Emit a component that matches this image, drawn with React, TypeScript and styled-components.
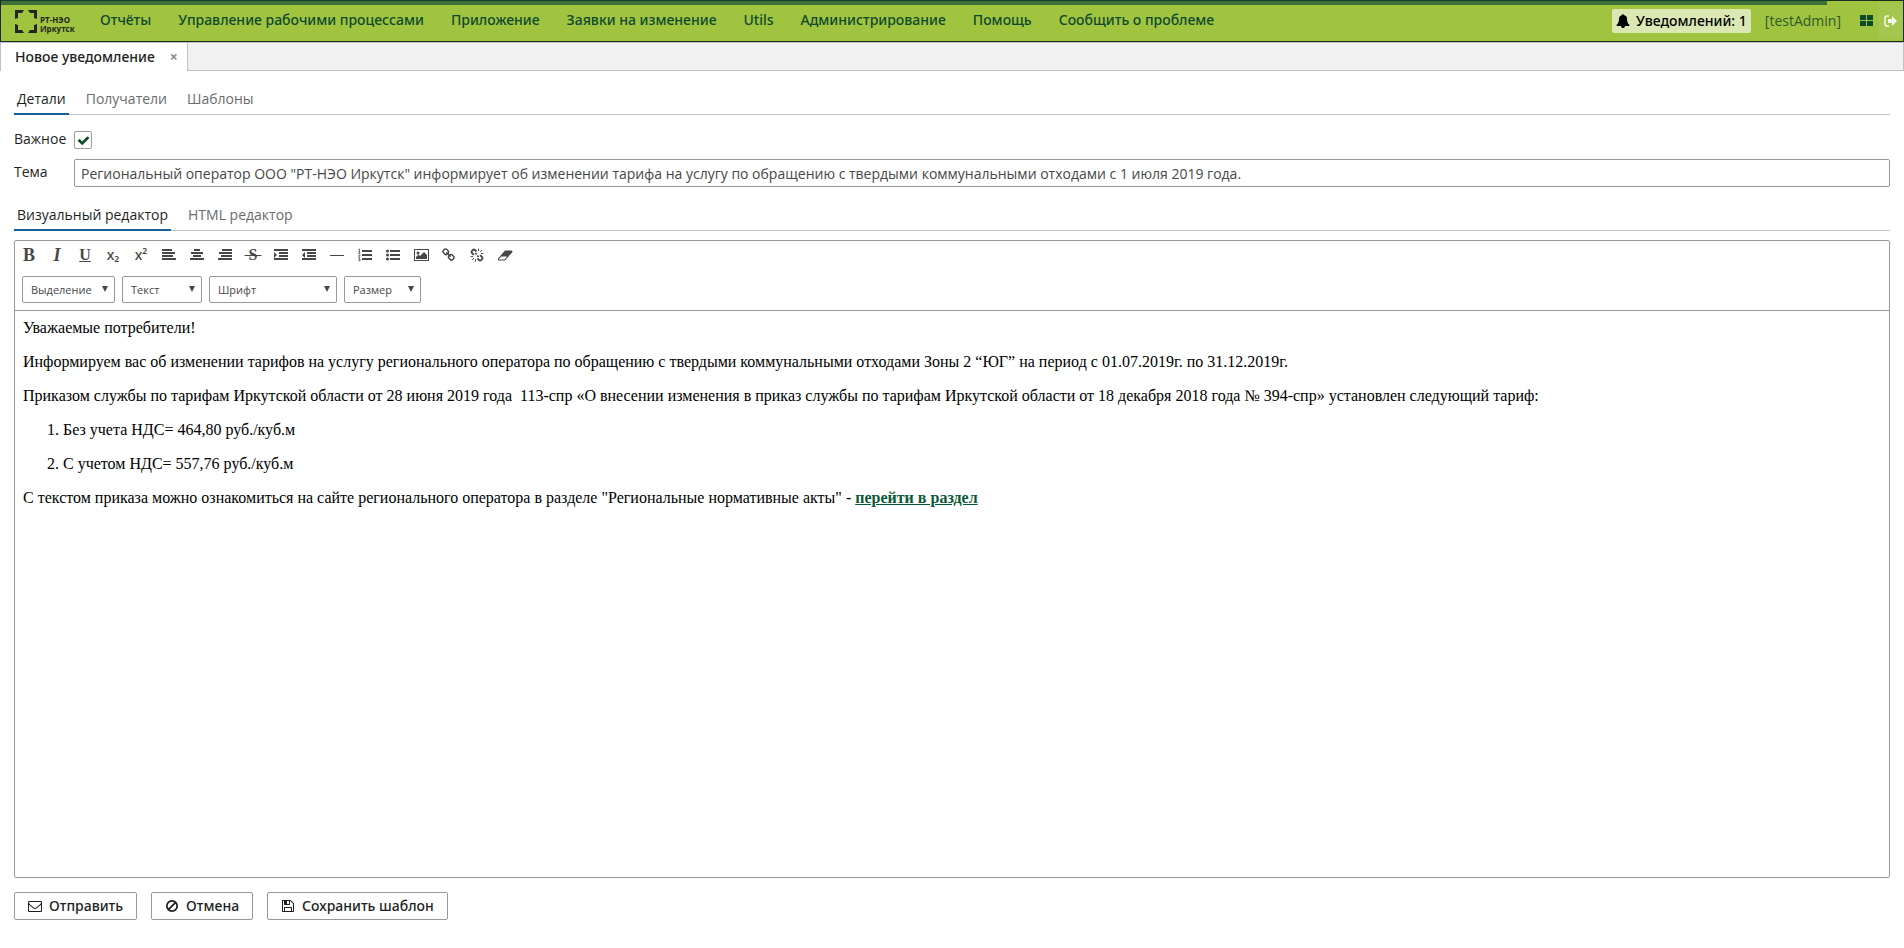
import React, { useState } from 'react';
import type { ReactNode } from 'react';
import styled, { createGlobalStyle, css } from 'styled-components';

const Global = createGlobalStyle`
  *, *::before, *::after { box-sizing: border-box; }
  body {
    margin: 0;
    font-family: "Open Sans", "Noto Sans", sans-serif;
    font-size: 14px;
    line-height: 20px;
    color: #1f1f1f;
    background: #fff;
  }
  button, input, select { font: inherit; color: inherit; margin: 0; }
`;

const medium = css`
  font-family: "Noto Sans", "Open Sans", sans-serif;
  font-weight: 500;
`;

const Page = styled.div`
  display: flex;
  flex-direction: column;
  min-height: 100vh;
`;

const Header = styled.header`
  position: relative;
  display: flex;
  align-items: center;
  height: 42px;
  padding-left: 14px;
  background: #a0c440;
  border: 1px solid #1f2a1f;
`;

const Progress = styled.div`
  position: absolute;
  top: -1px;
  left: 0;
  width: 96%;
  height: 5px;
  background: #3c7038;
  border-top: 1px solid #173d2d;
`;

const Logo = styled.div`
  display: flex;
  align-items: flex-end;
  gap: 3px;
  width: 62px;
  height: 24px;
  color: #23261f;
`;

const LogoText = styled.div`
  font-size: 8px;
  font-weight: 700;
  line-height: 9px;
  white-space: nowrap;
`;

const Menu = styled.nav`
  display: flex;
  flex: 1;
  gap: 3px;
  margin-left: 11px;
  padding-bottom: 2px;
`;

const MenuItem = styled.button`
  ${medium}
  padding: 0 12px;
  border: 0;
  background: none;
  color: #0f4a2e;
  white-space: nowrap;
`;

const Notifications = styled.button`
  ${medium}
  display: flex;
  align-items: center;
  gap: 6px;
  height: 24px;
  padding: 0 4px;
  border: 0;
  border-radius: 2px;
  background: #dbe8b4;
  color: #000;
  white-space: nowrap;
`;

const User = styled.span`
  margin: 0 12px 0 14px;
  color: #2f5a2b;
`;

const HeaderIcon = styled.button<{ $light?: boolean }>`
  display: flex;
  align-items: center;
  justify-content: center;
  width: 25px;
  height: 36px;
  padding: 0;
  border: 0;
  background: ${p => (p.$light ? '#a4c54e' : 'none')};
  color: ${p => (p.$light ? '#f4f7ea' : '#0d4a2c')};
`;

const WindowTabs = styled.div`
  display: flex;
  height: 29px;
  background: #f1f1f1;
  border: 1px solid #c2c2c2;
`;

const WindowTab = styled.div`
  ${medium}
  display: flex;
  align-items: center;
  gap: 12px;
  height: 28px;
  padding: 0 6px 0 14px;
  background: #fff;
  border-right: 1px solid #c2c2c2;
`;

const CloseTab = styled.button`
  width: 14px;
  padding: 0;
  border: 0;
  background: none;
  color: #8a8a8a;
  font-weight: 700;
  line-height: 14px;
`;

const Content = styled.main`
  display: flex;
  flex: 1;
  flex-direction: column;
  padding: 14px 14px 28px;
`;

const Tabs = styled.div`
  display: flex;
  gap: 14px;
  height: 30px;
  border-bottom: 1px solid #c4c4c4;
`;

const Tab = styled.button<{ $active?: boolean }>`
  height: 30px;
  padding: 0 3px;
  border: 0;
  border-bottom: 2px solid ${p => (p.$active ? '#1b5f97' : 'transparent')};
  background: none;
  color: ${p => (p.$active ? '#1f1f1f' : '#6b6b6b')};
`;

const Form = styled.div`
  display: grid;
  grid-template-columns: 60px 1fr;
  row-gap: 10px;
  align-items: center;
  padding: 16px 0 14px;
`;

const Label = styled.label`
  padding-bottom: 2px;
  line-height: 16px;
`;

const CheckWrap = styled.span`
  position: relative;
  display: flex;
  width: 18px;
  height: 18px;

  svg {
    position: absolute;
    left: 3px;
    top: 3px;
    pointer-events: none;
  }
`;

const CheckInput = styled.input`
  appearance: none;
  width: 18px;
  height: 18px;
  border: 1px solid #9b9b9b;
  border-radius: 2px;
  background: #fff;
`;

const TextInput = styled.input`
  width: 100%;
  height: 28px;
  padding: 0 6px;
  border: 1px solid #999;
  border-radius: 2px;
  background: #fff;
  color: #474747;
`;

const Editor = styled.section`
  display: flex;
  flex: 1;
  flex-direction: column;
  margin-top: 9px;
  border: 1px solid #999;
  border-radius: 2px;
`;

const Toolbar = styled.div`
  display: flex;
  flex-direction: column;
  gap: 7px;
  padding: 0 7px 7px;
  border-bottom: 1px solid #999;
  color: #474747;
`;

const ToolRow = styled.div`
  display: flex;
  gap: 7px;
`;

const IconRow = styled.div`
  display: flex;
  margin-left: -7px;
`;

const Tool = styled.button`
  display: flex;
  align-items: center;
  justify-content: center;
  width: 28px;
  height: 28px;
  padding: 0;
  border: 0;
  background: none;
`;

const Letter = styled.span<{ $large?: boolean; $italic?: boolean; $line?: string }>`
  font-family: "Liberation Serif", serif;
  font-size: ${p => (p.$large ? 18 : 16)}px;
  font-weight: 700;
  font-style: ${p => (p.$italic ? 'italic' : 'normal')};
  text-decoration: ${p => p.$line ?? 'none'};
  text-decoration-thickness: 1px;
`;

const Script = styled.span`
  font-family: "Noto Sans", sans-serif;
  font-weight: 500;
`;

const SelectWrap = styled.span<{ $width: number }>`
  position: relative;
  width: ${p => p.$width}px;

  svg {
    position: absolute;
    right: 7px;
    top: 10px;
    pointer-events: none;
  }
`;

const Select = styled.select`
  display: block;
  appearance: none;
  width: 100%;
  height: 27px;
  padding: 0 8px;
  border: 1px solid #999;
  border-radius: 2px;
  background: #fff;
  font-size: 11px;
`;

const Body = styled.div`
  flex: 1;
  padding: 8px;
  font-family: "Liberation Serif", serif;
  font-size: 16px;
  line-height: 18px;
  color: #000;

  p { margin: 0 0 16px; }
  ol { margin: 0; padding-left: 40px; }
  a { color: #0b5a37; font-weight: 700; }
`;

const Actions = styled.div`
  display: flex;
  gap: 14px;
  margin-top: 14px;
`;

const Action = styled.button`
  ${medium}
  display: flex;
  align-items: center;
  gap: 7px;
  height: 28px;
  padding: 0 13px;
  border: 1px solid #999;
  border-radius: 2px;
  background: #fff;
`;

const paths = {
  envelope:
    'M1664 1504v-768q-32 36-69 66-268 206-426 338-51 43-83 67t-86.500 48.500-102.500 24.500h-2q-48 0-102.500-24.500t-86.500-48.500-83-67q-158-132-426-338-37-30-69-66v768q0 13 9.500 22.500t22.500 9.500h1472q13 0 22.500-9.500t9.500-22.500zm0-1051v-24.500l-.5-13-3-12.500-5.500-9-9-7.500-14-2.500h-1472q-13 0-22.500 9.500t-9.500 22.500q0 168 147 284 193 152 401 317 6 5 35 29.500t46 37.500 44.500 31.500 50.500 27.500 43 9h2q20 0 43-9t50.500-27.500 44.500-31.500 46-37.500 35-29.500q208-165 401-317 54-43 100.500-115.500t46.500-131.500zm128-37v1088q0 66-47 113t-113 47h-1472q-66 0-113-47t-47-113v-1088q0-66 47-113t113-47h1472q66 0 113 47t47 113z',
  ban: 'M1440 893q0-161-87-295l-754 753q137 89 297 89 111 0 211.500-43.500t173.500-116.500 116-174.500 43-212.500zm-999 299l755-754q-135-91-300-91-148 0-273 73t-198 199-73 274q0 162 89 299zm1223-299q0 157-61 300t-163.500 246-245 164-298.500 61-298.500-61-245-164-163.500-246-61-300 61-299.500 163.500-245.500 245-164 298.500-61 298.500 61 245 164 163.500 245.500 61 299.500z',
  floppy:
    'M512 1536h768v-384h-768v384zm896 0h128v-896q0-14-10-38.500t-20-34.500l-281-281q-10-10-34-20t-39-10v416q0 40-28 68t-68 28h-576q-40 0-68-28t-28-68v-416h-128v1280h128v-416q0-40 28-68t68-28h832q40 0 68 28t28 68v416zm-384-928v-320q0-13-9.500-22.500t-22.500-9.500h-192q-13 0-22.500 9.500t-9.500 22.500v320q0 13 9.500 22.500t22.500 9.500h192q13 0 22.500-9.500t9.500-22.500zm640 32v928q0 40-28 68t-68 28h-1344q-40 0-68-28t-28-68v-1344q0-40 28-68t68-28h928q40 0 88 20t76 48l280 280q28 28 48 76t20 88z',
  eraser:
    'M832 1408l336-384h-768l-336 384h768zm1013-1077q15 34 9.500 71.500t-30.500 65.500l-896 1024q-38 44-96 44h-768q-38 0-69.500-20.500t-47.500-54.500q-15-34-9.500-71.500t30.500-65.500l896-1024q38-44 96-44h768q38 0 69.500 20.500t47.500 54.500z',
  bell: 'M1728 1408q0 52-38 90t-90 38h-448q0 106-75 181t-181 75-181-75-75-181h-448q-52 0-90-38t-38-90q50-42 91-88t85-119.500 74.500-158.500 50-206 19.500-260q0-152 117-282.500t307-158.500q-8-19-8-39 0-40 28-68t68-28 68 28 28 68q0 20-8 39 190 28 307 158.500t117 282.500q0 139 19.500 260t50 206 74.500 158.500 85 119.500 91 88z',
  link: 'M1456 1216q0-40-28-68l-208-208q-28-28-68-28-42 0-72 32 3 3 19 18.500t21.500 21.500 15 19 13 25.500 3.500 27.500q0 40-28 68t-68 28q-15 0-27.500-3.500t-25.500-13-19-15-21.500-21.500-18.500-19q-33 31-33 73 0 40 28 68l206 207q27 27 68 27 40 0 68-26l147-146q28-28 28-67zm-703-705q0-40-28-68l-206-207q-28-28-68-28-39 0-68 27l-147 146q-28 28-28 67 0 40 28 68l208 208q27 27 68 27 42 0 72-31-3-3-19-18.500t-21.500-21.500-15-19-13-25.500-3.500-27.500q0-40 28-68t68-28q15 0 27.500 3.500t25.500 13 19 15 21.500 21.500 18.500 19q33-31 33-73zm895 705q0 120-85 203l-147 146q-83 83-203 83-121 0-204-85l-206-207q-83-83-83-203 0-123 88-209l-88-88q-86 88-208 88-120 0-204-84l-208-208q-84-84-84-204t85-203l147-146q83-83 203-83 121 0 204 85l206 207q83 83 83 203 0 123-88 209l88 88q86-88 208-88 120 0 204 84l208 208q84 84 84 204z',
  check:
    'M1671 566q0 40-28 68l-724 724-136 136q-28 28-68 28t-68-28l-136-136-362-362q-28-28-28-68t28-68l136-136q28-28 68-28t68 28l294 295 656-657q28-28 68-28t68 28l136 136q28 28 28 68z',
};

function Glyph({ name, size = 14 }: { name: keyof typeof paths; size?: number }) {
  return (
    <svg width={size} height={size} viewBox={name === 'eraser' ? '0 0 1920 1792' : '0 0 1792 1792'} fill="currentColor" aria-hidden="true">
      <path d={paths[name]} />
    </svg>
  );
}

/* Icons below are drawn on a 14 by 14 grid. */
function Grid14({ children }: { children: ReactNode }) {
  return (
    <svg width="14" height="14" viewBox="0 0 14 14" fill="currentColor" aria-hidden="true">
      {children}
    </svg>
  );
}

function Bars({ rows }: { rows: [number, number][] }) {
  return (
    <>
      {rows.map(([x, w], i) => (
        <rect key={i} x={x} y={1 + i * 3} width={w} height={2} />
      ))}
    </>
  );
}

const indentRows: [number, number][] = [[0, 14], [5, 9], [5, 9], [0, 14]];

const tools: { label: string; icon: ReactNode }[] = [
  { label: 'Полужирный', icon: <Letter $large>B</Letter> },
  { label: 'Курсив', icon: <Letter $large $italic>I</Letter> },
  { label: 'Подчёркнутый', icon: <Letter $line="underline">U</Letter> },
  { label: 'Нижний индекс', icon: <Script>x₂</Script> },
  { label: 'Верхний индекс', icon: <Script>x²</Script> },
  { label: 'По левому краю', icon: <Grid14><Bars rows={[[0, 10], [0, 13], [0, 11], [0, 14]]} /></Grid14> },
  { label: 'По центру', icon: <Grid14><Bars rows={[[4, 6], [1, 12], [3, 8], [0, 14]]} /></Grid14> },
  { label: 'По правому краю', icon: <Grid14><Bars rows={[[4, 10], [1, 13], [3, 11], [0, 14]]} /></Grid14> },
  { label: 'Зачёркнутый', icon: <Letter $line="line-through">&nbsp;S&nbsp;</Letter> },
  { label: 'Увеличить отступ', icon: <Grid14><Bars rows={indentRows} /><path d="M0 4v6l3-3z" /></Grid14> },
  { label: 'Уменьшить отступ', icon: <Grid14><Bars rows={indentRows} /><path d="M3 4v6L0 7z" /></Grid14> },
  { label: 'Линия', icon: <Grid14><rect y="7" width="14" height="1" /></Grid14> },
  {
    label: 'Нумерованный список',
    icon: (
      <Grid14>
        <path d="M4 2h10v2H4zM4 6h10v2H4zM4 10h10v2H4z" />
        <path d="M.5 1h1v3M.3 4.200h2M.3 5.500h1.500v1L.5 8.200h1.800M.3 9.800h1.700L1 11.200h1v1.600H.3" fill="none" stroke="currentColor" strokeWidth=".8" />
      </Grid14>
    ),
  },
  {
    label: 'Маркированный список',
    icon: (
      <Grid14>
        <path d="M4 2h10v2H4zM4 6h10v2H4zM4 10h10v2H4z" />
        <circle cx="1.500" cy="3" r="1.500" />
        <circle cx="1.500" cy="7" r="1.500" />
        <circle cx="1.500" cy="11" r="1.500" />
      </Grid14>
    ),
  },
  {
    label: 'Изображение',
    icon: (
      <svg width="15" height="14" viewBox="0 0 15 14" fill="currentColor" aria-hidden="true">
        <rect x=".5" y="1.500" width="14" height="11" fill="none" stroke="currentColor" />
        <circle cx="4" cy="5" r="1.500" />
        <path d="M2 11V9l2.500-2.500L6 8l4-4 3 3v4z" />
      </svg>
    ),
  },
  { label: 'Ссылка', icon: <Glyph name="link" /> },
  {
    label: 'Убрать ссылку',
    icon: (
      <Grid14>
        <g fill="none" stroke="currentColor">
          <path strokeWidth="1.800" d="M6.500 3.500L5 2a1.600 1.600 0 0 0-2.200 0l-.8.800a1.600 1.600 0 0 0 0 2.200l1.800 1.800M7.500 10.500L9 12a1.600 1.600 0 0 0 2.200 0l.8-.8a1.600 1.600 0 0 0 0-2.200l-1.800-1.800M5 5.500l2 .5M7 8l2 .5" />
          <path strokeWidth=".9" d="M8.500.5v2.500M10 4l2-2M10.800 5.500h2.700M5.500 11v2.500M4 10l-2 2M.5 8.500h2.700" />
        </g>
      </Grid14>
    ),
  },
  { label: 'Очистить', icon: <Glyph name="eraser" size={15} /> },
];

const menu = [
  'Отчёты',
  'Управление рабочими процессами',
  'Приложение',
  'Заявки на изменение',
  'Utils',
  'Администрирование',
  'Помощь',
  'Сообщить о проблеме',
];

const selects = [
  { label: 'Выделение', width: 93 },
  { label: 'Текст', width: 80 },
  { label: 'Шрифт', width: 128 },
  { label: 'Размер', width: 77 },
];

function TabStrip({ items }: { items: string[] }) {
  const [active, setActive] = useState(0);
  return (
    <Tabs role="tablist">
      {items.map((item, i) => (
        <Tab key={item} role="tab" aria-selected={i === active} $active={i === active} onClick={() => setActive(i)}>
          {item}
        </Tab>
      ))}
    </Tabs>
  );
}

export default function App() {
  const [important, setImportant] = useState(true);

  return (
    <Page>
      <Global />
      <Header>
        <Progress />
        <Logo>
          <svg width="22" height="23" viewBox="0 0 22 23" fill="currentColor" aria-hidden="true">
            <path d="M0 0h9L7 3H3v5L0 9zM13 0h9v9l-3-1V3h-4zM0 14l3 1v5h4l2 3H0zM22 14v9h-9l2-3h4v-5z" />
          </svg>
          <LogoText>РТ-НЭО<br />Иркутск</LogoText>
        </Logo>
        <Menu>
          {menu.map(item => (
            <MenuItem key={item}>{item}</MenuItem>
          ))}
        </Menu>
        <Notifications>
          <Glyph name="bell" />
          Уведомлений: 1
        </Notifications>
        <User>[testAdmin]</User>
        <HeaderIcon aria-label="Окна">
          <Grid14>
            <path d="M1 1h6v5H1zM8 1h6v5H8zM1 7h6v5H1zM8 7h6v5H8z" />
          </Grid14>
        </HeaderIcon>
        <HeaderIcon $light aria-label="Выход">
          <Grid14>
            <path d="M5 2H3a2 2 0 0 0-2 2v6a2 2 0 0 0 2 2h2" fill="none" stroke="currentColor" strokeWidth="1.500" />
            <path d="M4 5h4V2l5 5-5 5V9H4z" />
          </Grid14>
        </HeaderIcon>
      </Header>

      <WindowTabs>
        <WindowTab>
          Новое уведомление
          <CloseTab aria-label="Закрыть">×</CloseTab>
        </WindowTab>
      </WindowTabs>

      <Content>
        <TabStrip items={['Детали', 'Получатели', 'Шаблоны']} />
        <Form>
          <Label htmlFor="important">Важное</Label>
          <CheckWrap>
            <CheckInput id="important" type="checkbox" checked={important} onChange={e => setImportant(e.target.checked)} />
            {important && (
              <svg width="13" height="13" viewBox="0 0 1792 1792" fill="#0d4a2c" aria-hidden="true">
                <path d={paths.check} />
              </svg>
            )}
          </CheckWrap>
          <Label htmlFor="subject">Тема</Label>
          <TextInput
            id="subject"
            defaultValue={'Региональный оператор ООО "РТ-НЭО Иркутск" информирует об изменении тарифа на услугу по обращению с твердыми коммунальными отходами с 1 июля 2019 года.'}
          />
        </Form>
        <TabStrip items={['Визуальный редактор', 'HTML редактор']} />

        <Editor>
          <Toolbar>
            <IconRow>
              {tools.map(tool => (
                <Tool key={tool.label} aria-label={tool.label}>{tool.icon}</Tool>
              ))}
            </IconRow>
            <ToolRow>
              {selects.map(({ label, width }) => (
                <SelectWrap key={label} $width={width}>
                  <Select aria-label={label}>
                    <option>{label}</option>
                  </Select>
                  <svg width="6" height="6" viewBox="0 0 6 6" fill="currentColor" aria-hidden="true">
                    <path d="M0 0h6L3 6z" />
                  </svg>
                </SelectWrap>
              ))}
            </ToolRow>
          </Toolbar>
          <Body>
            <p>Уважаемые потребители!</p>
            <p>
              Информируем вас об изменении тарифов на услугу регионального оператора по обращению с твердыми коммунальными
              отходами Зоны 2 “ЮГ” на период с 01.07.2019г. по 31.12.2019г.
            </p>
            <p>
              Приказом службы по тарифам Иркутской области от 28 июня 2019 года&nbsp; 113-спр «О внесении изменения в приказ
              службы по тарифам Иркутской области от 18 декабря 2018 года № 394-спр» установлен следующий тариф:
            </p>
            <ol>
              <li><p>Без учета НДС= 464,80 руб./куб.м</p></li>
              <li><p>С учетом НДС= 557,76 руб./куб.м</p></li>
            </ol>
            <p>
              С текстом приказа можно ознакомиться на сайте регионального оператора в разделе "Региональные нормативные
              акты" - <a href="#section">перейти в раздел</a>
            </p>
          </Body>
        </Editor>

        <Actions>
          <Action><Glyph name="envelope" />Отправить</Action>
          <Action><Glyph name="ban" />Отмена</Action>
          <Action><Glyph name="floppy" />Сохранить шаблон</Action>
        </Actions>
      </Content>
    </Page>
  );
}
